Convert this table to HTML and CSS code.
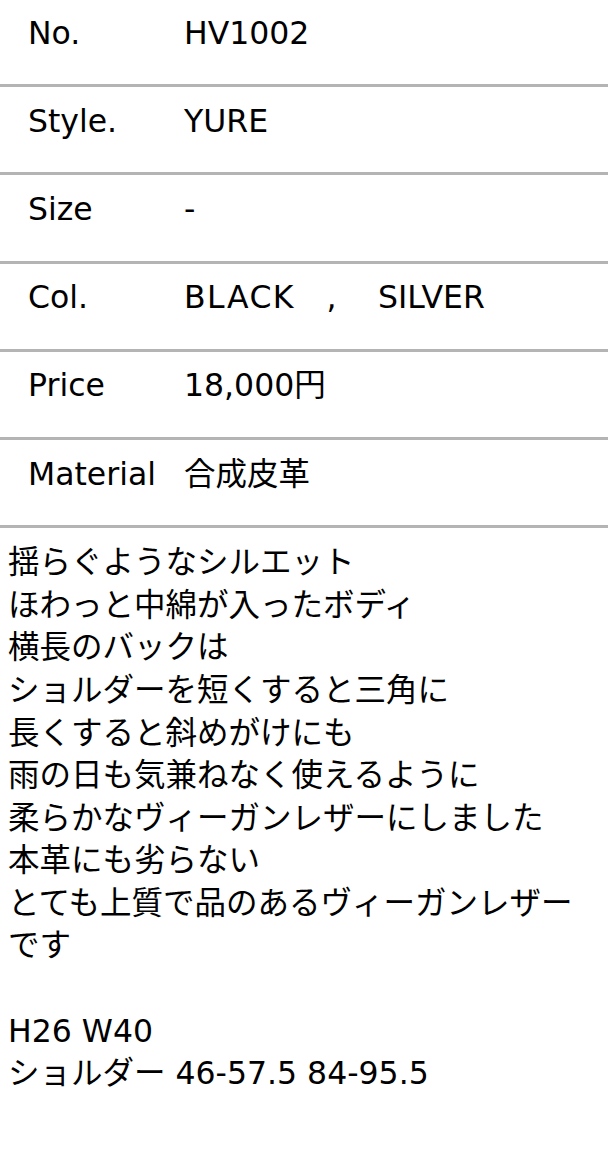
FILE: index.html
```html
<!DOCTYPE html>
<html lang="ja">
<head>
<meta charset="utf-8">
<title>HV1002 YURE</title>
<link rel="stylesheet" href="styles.css">
</head>
<body>
<div class="spec">
  <div class="row"><div class="label">No.</div><div class="value">HV1002</div></div>
  <div class="row"><div class="label">Style.</div><div class="value">YURE</div></div>
  <div class="row"><div class="label">Size</div><div class="value">-</div></div>
  <div class="row"><div class="label">Col.</div><div class="value"><span class="wide">BLACK</span>　,　 SILVER</div></div>
  <div class="row"><div class="label">Price</div><div class="value">18,000円</div></div>
  <div class="row"><div class="label">Material</div><div class="value">合成皮革</div></div>
</div>
<div class="desc">
  <p>揺らぐようなシルエット<br>ほわっと中綿が入ったボディ<br>横長のバックは<br>ショルダーを短くすると三角に<br>長くすると斜めがけにも<br>雨の日も気兼ねなく使えるように<br>柔らかなヴィーガンレザーにしました<br>本革にも劣らない<br>とても上質で品のあるヴィーガンレザーです</p>
  <p>H26 W40<br>ショルダー 46-57.5 84-95.5</p>
</div>
</body>
</html>
```
FILE: styles.css
```css
html, body {
  margin: 0;
  padding: 0;
  background: #fff;
}
body {
  color: #000;
  font-family: "DejaVu Sans", "Noto Sans CJK JP", sans-serif;
  font-size: 31.5px;
}
.spec {
  margin-top: -4px;
  border-bottom: 3px solid #b4b4b4;
}
.row {
  display: grid;
  grid-template-columns: 156px 1fr;
  box-sizing: border-box;
  height: 88.2px;
  border-top: 3px solid #b4b4b4;
  padding: 10.6px 0 0 28px;
  line-height: 47px;
}
.wide {
  letter-spacing: 1.5px;
}
.desc {
  padding: 13px 8px 0;
  line-height: 42.6px;
}
.desc p {
  margin: 0 0 42.6px;
}
```
